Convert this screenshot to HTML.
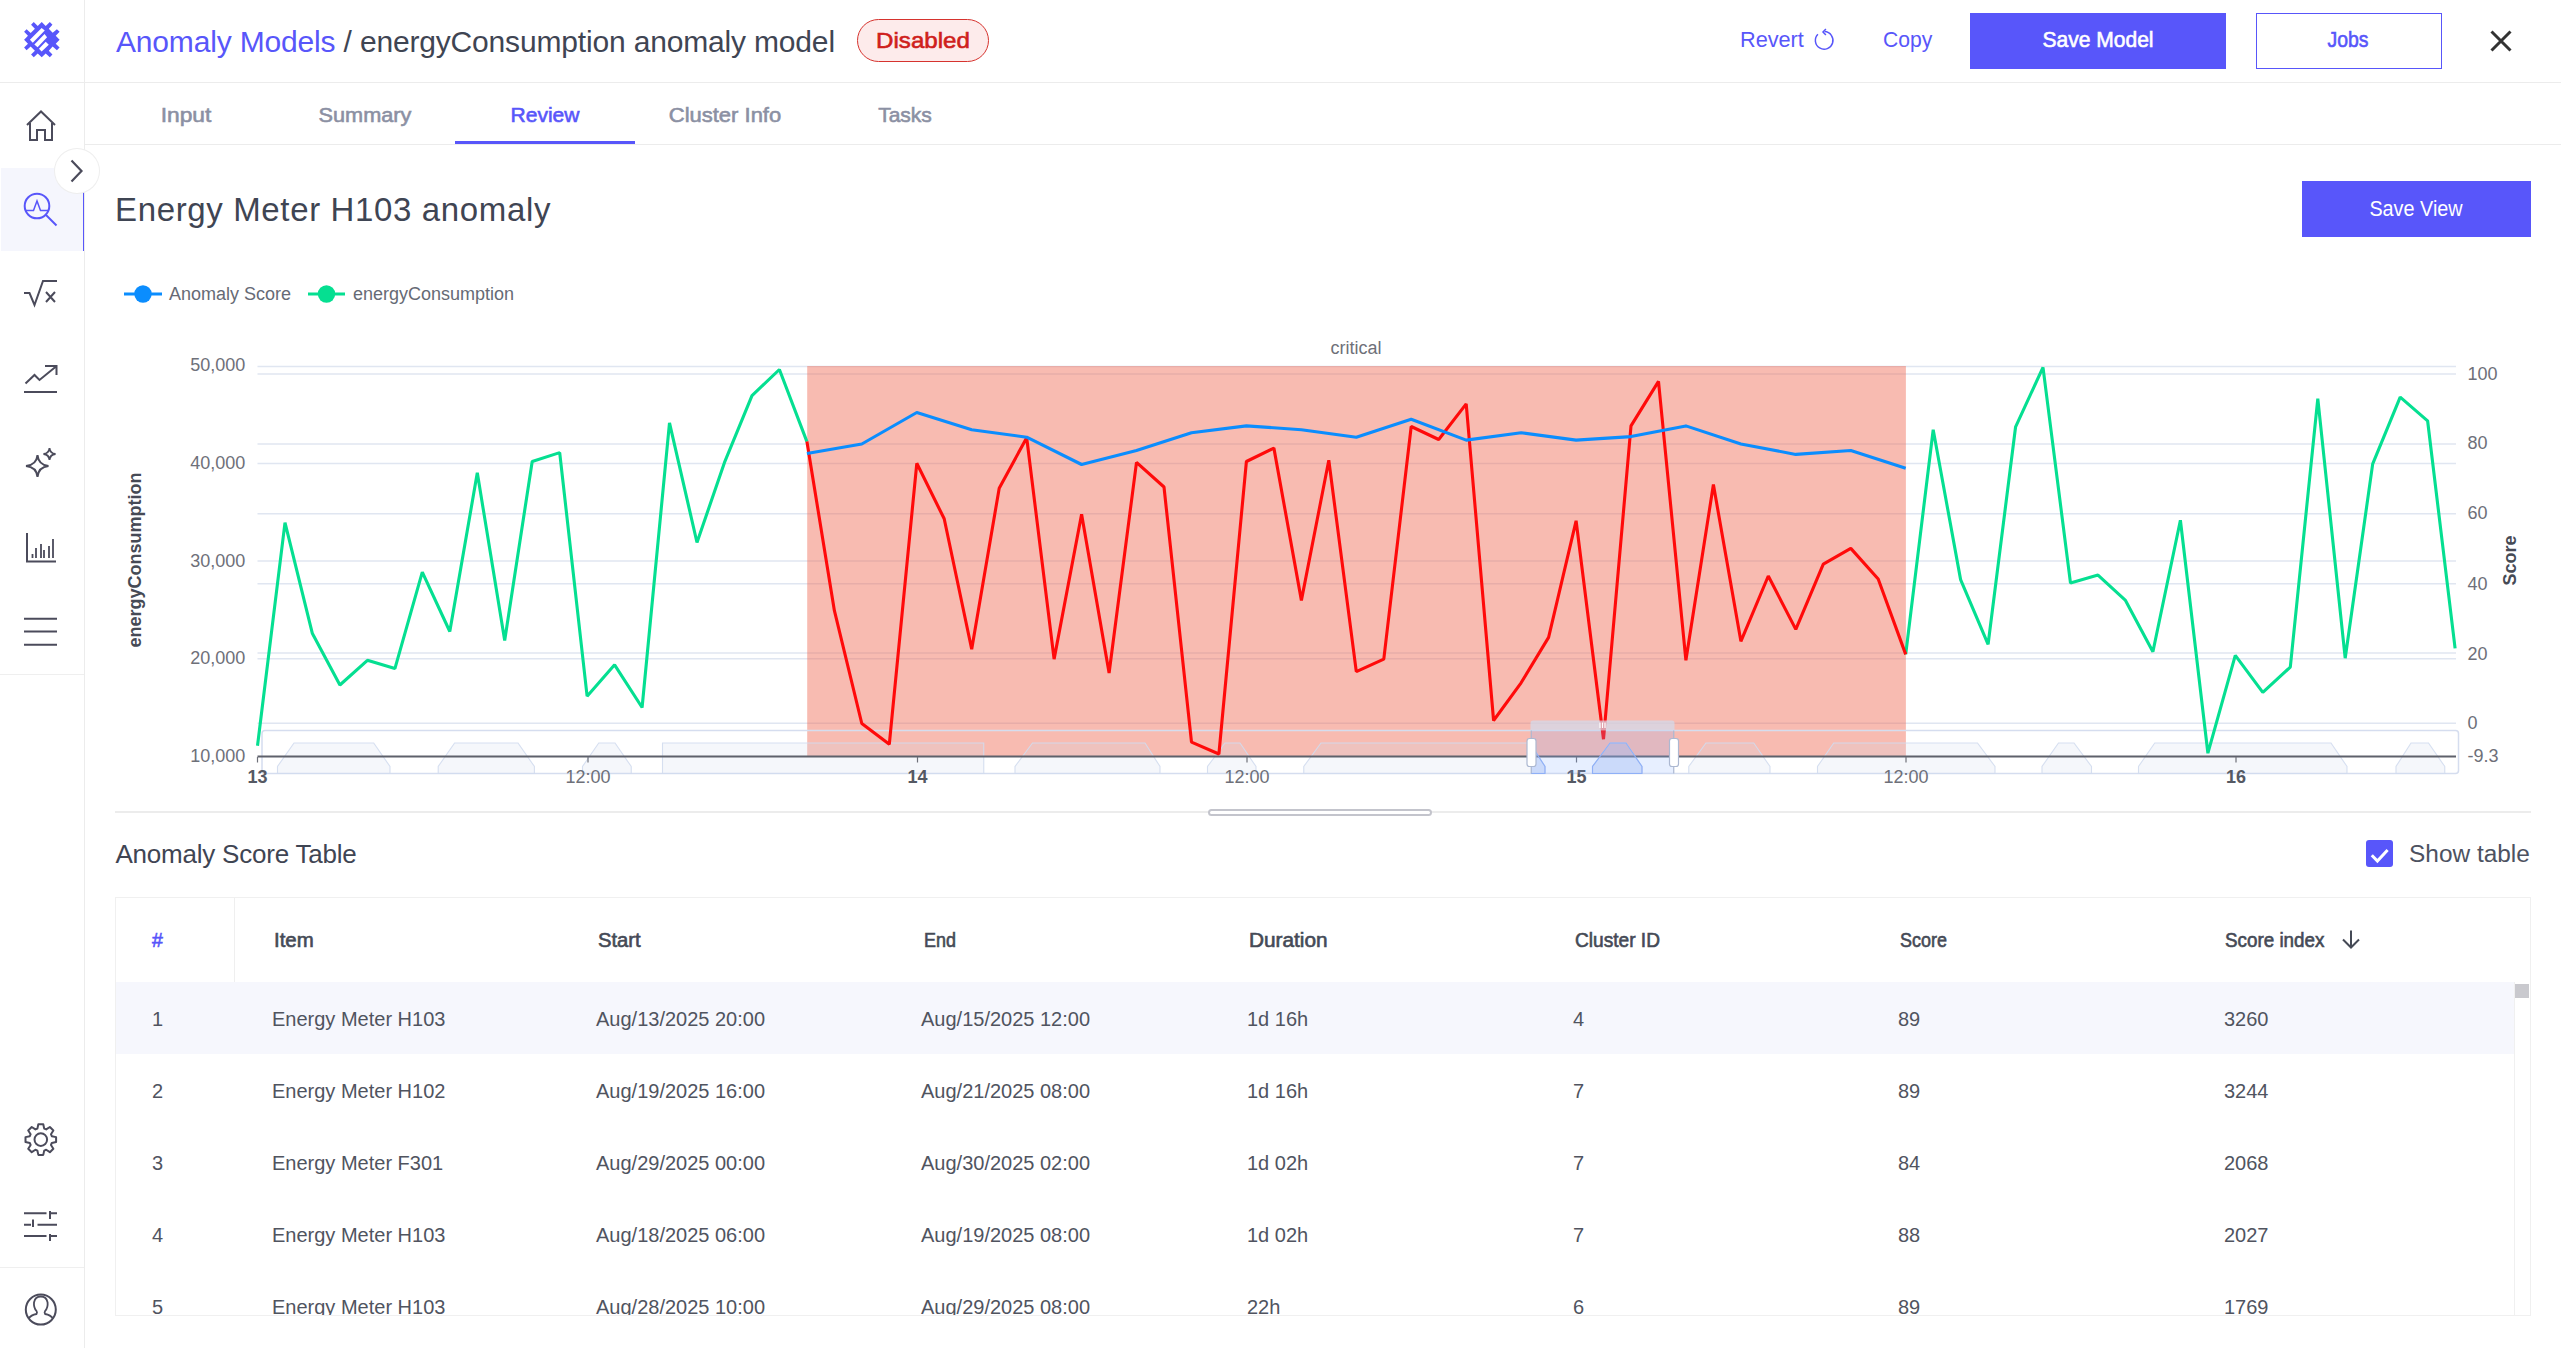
<!DOCTYPE html><html><head><meta charset="utf-8"><style>
html,body{margin:0;padding:0;width:2561px;height:1348px;overflow:hidden;background:#fff;font-family:"Liberation Sans", sans-serif;}
.t{position:absolute;white-space:nowrap;}
.a{position:absolute;}
svg{position:absolute;overflow:visible;}
</style></head><body>
<div class="a" style="left:0;top:0;width:85px;height:1348px;background:#fff;border-right:1px solid #ececec;box-sizing:border-box;"></div>
<div class="a" style="left:0;top:82px;width:2561px;height:1px;background:#ececec;"></div>
<div class="a" style="left:1px;top:168px;width:82px;height:83px;background:#f5f6fd;"></div>
<div class="a" style="left:83px;top:168px;width:1px;height:83px;background:#5856fa;"></div>
<div class="a" style="left:0;top:674px;width:84px;height:1px;background:#efefef;"></div>
<div class="a" style="left:0;top:1267px;width:84px;height:1px;background:#efefef;"></div>
<svg style="left:0;top:0" width="84" height="82" viewBox="0 0 84 82">
<path fill="#5856fa" fill-rule="evenodd" d="M33.75 22.10 L37.72 25.96 L41.73 22.10 L45.71 25.96 L49.83 22.10 L52.46 24.73 L48.79 28.66 L52.65 32.71 L56.90 29.16 L59.60 31.75 L55.74 35.80 L59.60 39.66 L55.74 43.71 L59.60 47.56 L56.90 50.27 L52.65 46.60 L48.79 50.65 L52.46 54.51 L49.83 57.21 L45.71 53.54 L41.73 57.21 L37.72 53.54 L33.75 57.21 L31.05 54.51 L34.90 50.65 L30.66 46.60 L26.61 50.27 L24.10 47.56 L27.96 43.71 L24.10 39.66 L27.96 35.80 L24.10 31.75 L26.61 29.16 L30.66 32.90 L34.90 28.66 L31.05 24.73Z M29.89 39.66 L41.66 27.89 L44.74 30.59 L32.78 42.74ZM34.33 44.48 L44.55 34.06 L47.06 37.34 L37.60 47.18ZM38.96 48.72 L45.71 41.78 L48.79 44.67 L41.66 51.62Z"/>
</svg>
<svg style="left:0px;top:84px" width="84" height="84" viewBox="0 84 84 84" fill="none" stroke="#4b4b5b" stroke-width="2" stroke-linecap="butt" stroke-linejoin="miter"><path d="M27 125 L41 111.5 L55 125 M30 123 L30 140 L37 140 L37 130 L45 130 L45 140 L52 140 L52 123"/></svg>
<svg style="left:0px;top:168px" width="84" height="84" viewBox="0 168 84 84" fill="none" stroke="#5856fa" stroke-width="2" stroke-linecap="butt" stroke-linejoin="miter"><circle cx="37" cy="206" r="12.3" stroke="#5856fa"/><path d="M46 215 L56.5 225.5" stroke="#5856fa"/><path d="M25.5 210.5 L33.5 210.5 L37 201 L40.5 210.5 L49 210.5" stroke="#5856fa" stroke-width="1.5"/></svg>
<svg style="left:0px;top:252px" width="84" height="84" viewBox="0 252 84 84" fill="none" stroke="#4b4b5b" stroke-width="2" stroke-linecap="butt" stroke-linejoin="miter"><path d="M24 293 L29.5 293 L34.5 305 L43 281 L57 281" /><path d="M46 292 L55 302 M55 292 L46 302"/></svg>
<svg style="left:0px;top:336px" width="84" height="84" viewBox="0 336 84 84" fill="none" stroke="#4b4b5b" stroke-width="2" stroke-linecap="butt" stroke-linejoin="miter"><path d="M25.5 383.5 L34.5 375 L39.5 380 L56 366.5 M45 366 L56.5 366 L56.5 375"/><path d="M24 392 L57 392"/></svg>
<svg style="left:0px;top:420px" width="84" height="84" viewBox="0 420 84 84" fill="none" stroke="#4b4b5b" stroke-width="2" stroke-linecap="butt" stroke-linejoin="miter"><path d="M37.5 455 Q38.5 465 48.5 466 Q38.5 467 37.5 477 Q36.5 467 26 466 Q36.5 465 37.5 455 Z"/><path d="M49.5 448 Q50 453.3 55.5 454 Q50 454.7 49.5 460 Q49 454.7 43.5 454 Q49 453.3 49.5 448 Z" stroke-width="1.8"/></svg>
<svg style="left:0px;top:504px" width="84" height="84" viewBox="0 504 84 84" fill="none" stroke="#4b4b5b" stroke-width="2" stroke-linecap="butt" stroke-linejoin="miter"><path d="M27 533 L27 561.5 L56 561.5"/><path d="M32.5 558 L32.5 554 M36 558 L36 548 M41 558 L41 544 M44 558 L44 550 M49 558 L49 546 M53 558 L53 539" stroke-width="1.8"/></svg>
<svg style="left:0px;top:588px" width="84" height="84" viewBox="0 588 84 84" fill="none" stroke="#4b4b5b" stroke-width="2" stroke-linecap="butt" stroke-linejoin="miter"><path d="M24 618.7 L57 618.7 M24 631.5 L57 631.5 M24 644.8 L57 644.8"/></svg>
<svg style="left:0px;top:1098px" width="84" height="84" viewBox="0 1098 84 84" fill="none" stroke="#4b4b5b" stroke-width="2" stroke-linecap="butt" stroke-linejoin="miter"><path d="M56.10 1137.13 L56.10 1142.07 L51.79 1143.00 L50.97 1144.97 L53.37 1148.67 L49.87 1152.17 L46.17 1149.77 L44.20 1150.59 L43.27 1154.90 L38.33 1154.90 L37.40 1150.59 L35.43 1149.77 L31.73 1152.17 L28.23 1148.67 L30.63 1144.97 L29.81 1143.00 L25.50 1142.07 L25.50 1137.13 L29.81 1136.20 L30.63 1134.23 L28.23 1130.53 L31.73 1127.03 L35.43 1129.43 L37.40 1128.61 L38.33 1124.30 L43.27 1124.30 L44.20 1128.61 L46.17 1129.43 L49.87 1127.03 L53.37 1130.53 L50.97 1134.23 L51.79 1136.20Z" stroke-linejoin="round"/><circle cx="40.8" cy="1139.6" r="6.3"/></svg>
<svg style="left:0px;top:1182px" width="84" height="84" viewBox="0 1182 84 84" fill="none" stroke="#4b4b5b" stroke-width="2" stroke-linecap="butt" stroke-linejoin="miter"><path d="M24 1213.2 L46.5 1213.2 M50 1213.2 L57 1213.2 M50 1211 L50 1219 M24 1224.7 L31 1224.7 M37.5 1224.7 L57 1224.7 M33 1219.5 L33 1227 M24 1236 L46.5 1236 M50 1236 L57 1236 M50 1234 L50 1241"/></svg>
<svg style="left:0px;top:1268px" width="84" height="84" viewBox="0 1268 84 84" fill="none" stroke="#4b4b5b" stroke-width="2" stroke-linecap="butt" stroke-linejoin="miter"><circle cx="40.8" cy="1309.6" r="15"/><path d="M28.5 1318.5 Q31 1315 36.5 1314 Q37.5 1312.5 36.5 1311 Q33.5 1307.5 34 1302.5 Q35 1296.5 40.8 1296.5 Q46.6 1296.5 47.6 1302.5 Q48.1 1307.5 45.1 1311 Q44.1 1312.5 45.1 1314 Q50.6 1315 53.1 1318.5" stroke-width="1.8"/></svg>
<div class="a" style="left:54.5px;top:149px;width:44px;height:44px;border-radius:50%;background:#fff;box-shadow:0 0 0 1px #eeeeee;"></div>
<svg style="left:50px;top:140px" width="60" height="60" viewBox="50 140 60 60" fill="none" stroke="#4b4b5b" stroke-width="2" stroke-linecap="butt" stroke-linejoin="miter"><path d="M71.5 160.5 L81.5 171 L71.5 181.5" stroke-width="2.2"/></svg>
<div class="t" id="crumb" style="left:116px;top:24px;font-size:30px;line-height:36px;color:#3f4553;letter-spacing:-0.17px;"><span style="color:#5856fa">Anomaly Models</span> / energyConsumption anomaly model</div>
<div class="a" style="left:857px;top:19px;width:132px;height:43px;box-sizing:border-box;border:1.5px solid #d6332e;border-radius:22px;background:#fdebeb;"></div>
<div class="t" style="left:922.5px;top:27.68px;font-size:22px;line-height:26.4px;color:#cf1f1c;font-weight:normal;letter-spacing:0px;transform-origin:center;transform:translateX(-50%) scaleX(1.096);-webkit-text-stroke:0.6px #cf1f1c;">Disabled</div>
<div class="t" style="left:1740px;top:27.18px;font-size:22px;line-height:26.4px;color:#5856fa;font-weight:normal;letter-spacing:0px;transform-origin:left;transform:scaleX(0.985);">Revert</div>
<svg style="left:1810px;top:26px" width="30" height="30" viewBox="1810 26 30 30" fill="none" stroke="#5856fa" stroke-width="1.5"><path d="M1817.9 34.2 A8.8 8.8 0 1 0 1824.6 31.6"/><path d="M1825.9 29 L1823 32 L1825.9 35"/></svg>
<div class="t" style="left:1882.5px;top:27.18px;font-size:22px;line-height:26.4px;color:#5856fa;font-weight:normal;letter-spacing:0px;transform-origin:left;transform:scaleX(0.96);">Copy</div>
<div class="a" style="left:1970px;top:13px;width:256px;height:56px;background:#5856fa;"></div>
<div class="t" style="left:2097.5px;top:27.18px;font-size:22px;line-height:26.4px;color:#fff;font-weight:normal;letter-spacing:0px;transform-origin:center;transform:translateX(-50%) scaleX(0.956);-webkit-text-stroke:0.6px #fff;">Save Model</div>
<div class="a" style="left:2256px;top:13px;width:186px;height:56px;box-sizing:border-box;border:1.5px solid #5856fa;background:#fff;"></div>
<div class="t" style="left:2347.75px;top:27.18px;font-size:22px;line-height:26.4px;color:#5856fa;font-weight:normal;letter-spacing:0px;transform-origin:center;transform:translateX(-50%) scaleX(0.883);-webkit-text-stroke:0.6px #5856fa;">Jobs</div>
<svg style="left:2485px;top:25px" width="32" height="32" viewBox="2485 25 32 32" fill="none" stroke="#333" stroke-width="3"><path d="M2491.5 31.5 L2510.5 50.5 M2510.5 31.5 L2491.5 50.5"/></svg>
<div class="t" style="left:185.5px;top:101.92px;font-size:21px;line-height:25.2px;color:#8b90a3;font-weight:normal;letter-spacing:0px;transform-origin:center;transform:translateX(-50%) scaleX(1.085);-webkit-text-stroke:0.6px #8b90a3;">Input</div>
<div class="t" style="left:365.0px;top:101.92px;font-size:21px;line-height:25.2px;color:#8b90a3;font-weight:normal;letter-spacing:0px;transform-origin:center;transform:translateX(-50%) scaleX(1.033);-webkit-text-stroke:0.6px #8b90a3;">Summary</div>
<div class="t" style="left:545.0px;top:101.92px;font-size:21px;line-height:25.2px;color:#5856fa;font-weight:normal;letter-spacing:0px;transform-origin:center;transform:translateX(-50%) scaleX(1.0);-webkit-text-stroke:0.6px #5856fa;">Review</div>
<div class="t" style="left:725.0px;top:101.92px;font-size:21px;line-height:25.2px;color:#8b90a3;font-weight:normal;letter-spacing:0px;transform-origin:center;transform:translateX(-50%) scaleX(1.047);-webkit-text-stroke:0.6px #8b90a3;">Cluster Info</div>
<div class="t" style="left:905.0px;top:101.92px;font-size:21px;line-height:25.2px;color:#8b90a3;font-weight:normal;letter-spacing:0px;transform-origin:center;transform:translateX(-50%) scaleX(1.0);-webkit-text-stroke:0.6px #8b90a3;">Tasks</div>
<div class="a" style="left:84px;top:144px;width:2477px;height:1px;background:#ececec;"></div>
<div class="a" style="left:455px;top:141px;width:180px;height:3px;background:#5856fa;"></div>
<div class="t" style="left:115px;top:189.77px;font-size:33px;line-height:39.6px;color:#3f4553;font-weight:normal;letter-spacing:0.64px;transform-origin:left;">Energy Meter H103 anomaly</div>
<div class="a" style="left:2302px;top:181px;width:229px;height:56px;background:#5856fa;"></div>
<div class="t" style="left:2416px;top:195.68px;font-size:22px;line-height:26.4px;color:#fff;font-weight:normal;letter-spacing:0px;transform-origin:center;transform:translateX(-50%) scaleX(0.9);">Save View</div>
<svg style="left:0;top:0" width="2561" height="1348" viewBox="0 0 2561 1348" font-family='"Liberation Sans", sans-serif'>
<g>
<line x1="124" y1="294" x2="162" y2="294" stroke="#0b8dfe" stroke-width="3"/><circle cx="143" cy="294" r="8.7" fill="#0b8dfe"/>
<line x1="308" y1="294" x2="345" y2="294" stroke="#05df91" stroke-width="3"/><circle cx="326.5" cy="294" r="8.7" fill="#05df91"/>
<text id="lg1" x="169" y="299.5" font-size="18" fill="#666a75">Anomaly Score</text>
<text id="lg2" x="353" y="299.5" font-size="18" fill="#666a75">energyConsumption</text>
</g>
<text x="1356" y="353.5" font-size="18" fill="#6e7079" text-anchor="middle">critical</text>
<line x1="257.5" y1="366.5" x2="2456" y2="366.5" stroke="#e0e6f1" stroke-width="1.5"/>
<line x1="257.5" y1="463.5" x2="2456" y2="463.5" stroke="#e0e6f1" stroke-width="1.5"/>
<line x1="257.5" y1="561" x2="2456" y2="561" stroke="#e0e6f1" stroke-width="1.5"/>
<line x1="257.5" y1="658.8" x2="2456" y2="658.8" stroke="#e0e6f1" stroke-width="1.5"/>
<line x1="257.5" y1="374" x2="2456" y2="374" stroke="#e0e6f1" stroke-width="1.5"/>
<line x1="257.5" y1="444" x2="2456" y2="444" stroke="#e0e6f1" stroke-width="1.5"/>
<line x1="257.5" y1="513.7" x2="2456" y2="513.7" stroke="#e0e6f1" stroke-width="1.5"/>
<line x1="257.5" y1="583.8" x2="2456" y2="583.8" stroke="#e0e6f1" stroke-width="1.5"/>
<line x1="257.5" y1="653" x2="2456" y2="653" stroke="#e0e6f1" stroke-width="1.5"/>
<line x1="257.5" y1="723.3" x2="2456" y2="723.3" stroke="#e0e6f1" stroke-width="1.5"/>
<rect x="807.2" y="366" width="1098.7" height="391" fill="#ef6a55" fill-opacity="0.46"/>
<rect x="262" y="730.5" width="2196.5" height="43" rx="3" fill="none" stroke="#d5ddef" stroke-width="1.5"/>
<path d="M277.5 773.5 L277.5 766.5 L294 743 L373.7 743 L390 766.5 L390 773.5 Z M438.2 773.5 L438.2 766.5 L454.6 743 L518 743 L534.4 766.5 L534.4 773.5 Z M582.5 773.5 L582.5 766.5 L598.75 743 L615 743 L631.25 766.5 L631.25 773.5 Z M662.5 773.5 L662.5 743 L983.75 743 L983.75 773.5 Z M1015 773.5 L1015 766.5 L1032.5 743 L1145 743 L1160 766.5 L1160 773.5 Z M1207.5 773.5 L1207.5 766.5 L1225 743 L1240 743 L1256 766.5 L1256 773.5 Z M1303.75 773.5 L1303.75 766.5 L1321 743 L1530 743 L1545 766.5 L1545 773.5 Z M1592.5 773.5 L1592.5 766.5 L1610 743 L1626 743 L1642 766.5 L1642 773.5 Z M1688.75 773.5 L1688.75 766.5 L1706 743 L1753.75 743 L1770 766.5 L1770 773.5 Z M1817.5 773.5 L1817.5 766.5 L1833.75 743 L1977.5 743 L1995 766.5 L1995 773.5 Z M2042 773.5 L2042 766.5 L2058.5 743 L2074 743 L2091.5 766.5 L2091.5 773.5 Z M2138.5 773.5 L2138.5 766.5 L2154.75 743 L2331 743 L2347 766.5 L2347 773.5 Z M2396 773.5 L2396 766.5 L2411 743 L2428.5 743 L2444.75 766.5 L2444.75 773.5 Z" fill="#d2dbee" fill-opacity="0.22" stroke="#d2dbee" stroke-opacity="0.9" stroke-width="1.1"/>
<clipPath id="selclip"><rect x="1531" y="720" width="143" height="54"/></clipPath>
<line x1="257.5" y1="756.5" x2="2456" y2="756.5" stroke="#5e616b" stroke-width="2"/>
<line x1="257.5" y1="757" x2="257.5" y2="762.5" stroke="#6e7079" stroke-width="1.2"/>
<text x="257.5" y="782.5" font-size="18" fill="#555963" font-weight="bold" text-anchor="middle">13</text>
<line x1="588" y1="757" x2="588" y2="762.5" stroke="#6e7079" stroke-width="1.2"/>
<text x="588" y="782.5" font-size="18" fill="#6e7079" font-weight="normal" text-anchor="middle">12:00</text>
<line x1="917.5" y1="757" x2="917.5" y2="762.5" stroke="#6e7079" stroke-width="1.2"/>
<text x="917.5" y="782.5" font-size="18" fill="#555963" font-weight="bold" text-anchor="middle">14</text>
<line x1="1247" y1="757" x2="1247" y2="762.5" stroke="#6e7079" stroke-width="1.2"/>
<text x="1247" y="782.5" font-size="18" fill="#6e7079" font-weight="normal" text-anchor="middle">12:00</text>
<line x1="1576.5" y1="757" x2="1576.5" y2="762.5" stroke="#6e7079" stroke-width="1.2"/>
<text x="1576.5" y="782.5" font-size="18" fill="#555963" font-weight="bold" text-anchor="middle">15</text>
<line x1="1906" y1="757" x2="1906" y2="762.5" stroke="#6e7079" stroke-width="1.2"/>
<text x="1906" y="782.5" font-size="18" fill="#6e7079" font-weight="normal" text-anchor="middle">12:00</text>
<line x1="2236" y1="757" x2="2236" y2="762.5" stroke="#6e7079" stroke-width="1.2"/>
<text x="2236" y="782.5" font-size="18" fill="#555963" font-weight="bold" text-anchor="middle">16</text>
<text x="245.3" y="371.3" font-size="18" fill="#6e7079" text-anchor="end">50,000</text>
<text x="245.3" y="468.9" font-size="18" fill="#6e7079" text-anchor="end">40,000</text>
<text x="245.3" y="566.6" font-size="18" fill="#6e7079" text-anchor="end">30,000</text>
<text x="245.3" y="664.2" font-size="18" fill="#6e7079" text-anchor="end">20,000</text>
<text x="245.3" y="761.9" font-size="18" fill="#6e7079" text-anchor="end">10,000</text>
<text x="2467.5" y="379.8" font-size="18" fill="#6e7079">100</text>
<text x="2467.5" y="449.4" font-size="18" fill="#6e7079">80</text>
<text x="2467.5" y="519.0" font-size="18" fill="#6e7079">60</text>
<text x="2467.5" y="590.0" font-size="18" fill="#6e7079">40</text>
<text x="2467.5" y="659.5" font-size="18" fill="#6e7079">20</text>
<text x="2467.5" y="729.1" font-size="18" fill="#6e7079">0</text>
<text x="2467.5" y="761.5" font-size="18" fill="#6e7079">-9.3</text>
<text transform="translate(140.5 560) rotate(-90)" font-size="18" font-weight="bold" fill="#464a55" text-anchor="middle">energyConsumption</text>
<text transform="translate(2515.5 560.5) rotate(-90)" font-size="18" font-weight="bold" fill="#464a55" text-anchor="middle">Score</text>
<clipPath id="gridclip"><rect x="255" y="366" width="2204" height="392"/></clipPath><g clip-path="url(#gridclip)">
<polyline points="257.5,745.8 285.0,522.6 312.4,633.6 339.9,685.0 367.4,660.3 394.9,668.6 422.3,572.2 449.8,631.5 477.3,472.8 504.7,640.4 532.2,461.5 559.7,452.6 587.1,696.2 614.6,664.8 642.1,707.5 669.5,422.9 697.0,542.5 724.5,462.4 752.0,395.6 779.4,369.5 806.9,441.6" fill="none" stroke="#05df91" stroke-width="3.1" stroke-linejoin="bevel"/>
<polyline points="1905.7,654.4 1933.2,429.7 1960.6,579.6 1988.1,644.3 2015.6,426.8 2043.0,367.4 2070.5,583.1 2098.0,575.1 2125.5,600.4 2152.9,651.7 2180.4,520.2 2207.9,753.2 2235.3,655.3 2262.8,692.3 2290.3,667.1 2317.8,398.6 2345.2,658.2 2372.7,463.9 2400.2,397.1 2427.6,420.8 2455.1,648.4" fill="none" stroke="#05df91" stroke-width="3.1" stroke-linejoin="bevel"/>
<polyline points="806.9,441.6 834.4,610.7 861.8,723.5 889.3,744.3 916.8,463.3 944.2,518.8 971.7,649.3 999.2,488.2 1026.7,437.7 1054.1,659.1 1081.6,514.3 1109.1,673.0 1136.5,462.4 1164.0,487.0 1191.5,742.2 1218.9,754.0 1246.4,461.5 1273.9,448.1 1301.4,600.4 1328.8,460.3 1356.3,671.6 1383.8,659.1 1411.2,426.5 1438.7,439.5 1466.2,403.9 1493.6,720.5 1521.1,682.8 1548.6,637.4 1576.1,520.8 1603.5,739.2 1631.0,425.9 1658.5,381.4 1685.9,660.3 1713.4,484.6 1740.9,641.3 1768.3,576.0 1795.8,629.4 1823.3,564.2 1850.8,548.4 1878.2,579.0 1905.7,654.4" fill="none" stroke="#ff0a0a" stroke-width="3.1" stroke-linejoin="bevel"/>
<polyline points="806.9,453.5 861.8,444.0 916.8,412.5 971.7,429.7 1026.7,437.2 1081.6,464.5 1136.5,450.5 1191.5,432.7 1246.4,425.9 1301.4,429.7 1356.3,437.2 1411.2,419.3 1466.2,440.1 1521.1,432.7 1576.1,440.1 1631.0,436.6 1685.9,425.9 1740.9,444.0 1795.8,454.4 1850.8,450.5 1905.7,468.3" fill="none" stroke="#0b8dfe" stroke-width="3.1" stroke-linejoin="round"/>
</g>
<rect x="1531" y="730.5" width="143" height="43" fill="#87afff" fill-opacity="0.2"/>
<path d="M277.5 773.5 L277.5 766.5 L294 743 L373.7 743 L390 766.5 L390 773.5 Z M438.2 773.5 L438.2 766.5 L454.6 743 L518 743 L534.4 766.5 L534.4 773.5 Z M582.5 773.5 L582.5 766.5 L598.75 743 L615 743 L631.25 766.5 L631.25 773.5 Z M662.5 773.5 L662.5 743 L983.75 743 L983.75 773.5 Z M1015 773.5 L1015 766.5 L1032.5 743 L1145 743 L1160 766.5 L1160 773.5 Z M1207.5 773.5 L1207.5 766.5 L1225 743 L1240 743 L1256 766.5 L1256 773.5 Z M1303.75 773.5 L1303.75 766.5 L1321 743 L1530 743 L1545 766.5 L1545 773.5 Z M1592.5 773.5 L1592.5 766.5 L1610 743 L1626 743 L1642 766.5 L1642 773.5 Z M1688.75 773.5 L1688.75 766.5 L1706 743 L1753.75 743 L1770 766.5 L1770 773.5 Z M1817.5 773.5 L1817.5 766.5 L1833.75 743 L1977.5 743 L1995 766.5 L1995 773.5 Z M2042 773.5 L2042 766.5 L2058.5 743 L2074 743 L2091.5 766.5 L2091.5 773.5 Z M2138.5 773.5 L2138.5 766.5 L2154.75 743 L2331 743 L2347 766.5 L2347 773.5 Z M2396 773.5 L2396 766.5 L2411 743 L2428.5 743 L2444.75 766.5 L2444.75 773.5 Z" fill="#8fb0f7" fill-opacity="0.25" stroke="#8fb0f7" stroke-width="1.1" clip-path="url(#selclip)"/>
<path d="M1530.5 730.5 L1530.5 723 Q1530.5 720.5 1533 720.5 L1672 720.5 Q1674.5 720.5 1674.5 723 L1674.5 730.5 Z" fill="#d2dbee" fill-opacity="0.7"/>
<line x1="1531.25" y1="730.5" x2="1531.25" y2="773.5" stroke="#acb8d1" stroke-width="1.2"/>
<line x1="1673.75" y1="730.5" x2="1673.75" y2="773.5" stroke="#acb8d1" stroke-width="1.2"/>
<rect x="1527" y="738.5" width="9" height="28" rx="2.5" fill="#fff" stroke="#acb8d1" stroke-width="1.2"/>
<rect x="1669.5" y="738.5" width="9" height="28" rx="2.5" fill="#fff" stroke="#acb8d1" stroke-width="1.2"/>
<path d="M1600 722.5 L1600 728 M1602.5 722.5 L1602.5 728 M1605 722.5 L1605 728" stroke="#fff" stroke-width="1.2"/>
</svg>
<div class="a" style="left:115px;top:811px;width:2416px;height:1.5px;background:#ececec;"></div>
<div class="a" style="left:1207.5px;top:809px;width:224px;height:7px;box-sizing:border-box;border-radius:3.5px;background:#fff;border:2px solid #c3c4cc;"></div>
<div class="t" style="left:115.5px;top:839.14px;font-size:26px;line-height:31.2px;color:#3f4553;font-weight:normal;letter-spacing:-0.22px;transform-origin:left;">Anomaly Score Table</div>
<div class="a" style="left:2366px;top:840px;width:27px;height:27px;border-radius:3px;background:#5856fa;"></div>
<svg style="left:2366px;top:840px" width="27" height="27" viewBox="0 0 27 27" fill="none" stroke="#fff" stroke-width="3"><path d="M5.8 15.2 L11.4 21 L21.6 9.9"/></svg>
<div class="t" style="left:2409px;top:840.73px;font-size:23px;line-height:27.6px;color:#4d5261;font-weight:normal;letter-spacing:0px;transform-origin:left;transform:scaleX(1.062);">Show table</div>
<div class="a" style="left:115px;top:897px;width:2416px;height:419px;box-sizing:border-box;border:1px solid #f0f0f0;"></div>
<div class="a" style="left:234px;top:898px;width:1px;height:84px;background:#efefef;"></div>
<div class="a" style="left:116px;top:981.5px;width:2414px;height:1px;background:#efefef;"></div>
<div class="a" style="left:116px;top:982px;width:2398px;height:72px;background:#f6f7fd;"></div>
<div class="a" style="left:2514px;top:982px;width:16px;height:333px;background:#fff;border-left:1px solid #f0f0f0;box-sizing:border-box;"></div>
<div class="a" style="left:2515px;top:983.5px;width:14px;height:14px;background:#c9c9ce;"></div>
<div class="t" style="left:152px;top:928.74px;font-size:19.5px;line-height:23.4px;color:#5856fa;font-weight:normal;letter-spacing:0px;transform-origin:left;-webkit-text-stroke:0.6px #5856fa;">#</div>
<div class="t" style="left:274px;top:928.74px;font-size:19.5px;line-height:23.4px;color:#454a56;font-weight:normal;letter-spacing:0px;transform-origin:left;transform:scaleX(1.047);-webkit-text-stroke:0.6px #454a56;">Item</div>
<div class="t" style="left:597.5px;top:928.74px;font-size:19.5px;line-height:23.4px;color:#454a56;font-weight:normal;letter-spacing:0px;transform-origin:left;transform:scaleX(1.037);-webkit-text-stroke:0.6px #454a56;">Start</div>
<div class="t" style="left:923.75px;top:928.74px;font-size:19.5px;line-height:23.4px;color:#454a56;font-weight:normal;letter-spacing:0px;transform-origin:left;transform:scaleX(0.92);-webkit-text-stroke:0.6px #454a56;">End</div>
<div class="t" style="left:1249px;top:928.74px;font-size:19.5px;line-height:23.4px;color:#454a56;font-weight:normal;letter-spacing:0px;transform-origin:left;transform:scaleX(1.066);-webkit-text-stroke:0.6px #454a56;">Duration</div>
<div class="t" style="left:1574.5px;top:928.74px;font-size:19.5px;line-height:23.4px;color:#454a56;font-weight:normal;letter-spacing:0px;transform-origin:left;transform:scaleX(0.98);-webkit-text-stroke:0.6px #454a56;">Cluster ID</div>
<div class="t" style="left:1900px;top:928.74px;font-size:19.5px;line-height:23.4px;color:#454a56;font-weight:normal;letter-spacing:0px;transform-origin:left;transform:scaleX(0.92);-webkit-text-stroke:0.6px #454a56;">Score</div>
<div class="t" style="left:2225px;top:928.74px;font-size:19.5px;line-height:23.4px;color:#454a56;font-weight:normal;letter-spacing:0px;transform-origin:left;transform:scaleX(0.965);-webkit-text-stroke:0.6px #454a56;">Score index</div>
<svg style="left:2336px;top:926px" width="30" height="26" viewBox="2336 926 30 26" fill="none" stroke="#454a56" stroke-width="2"><path d="M2351 930.5 L2351 947 M2343 939.5 L2351 947.5 L2359 939.5"/></svg>
<div class="a" style="left:116px;top:982px;width:2398px;height:333px;overflow:hidden;">
<div class="t" style="left:36px;top:25.32px;font-size:20px;line-height:24.0px;color:#50545f;font-weight:normal;letter-spacing:0px;transform-origin:left;">1</div>
<div class="t" style="left:156px;top:25.32px;font-size:20px;line-height:24.0px;color:#50545f;font-weight:normal;letter-spacing:0px;transform-origin:left;">Energy Meter H103</div>
<div class="t" style="left:480px;top:25.32px;font-size:20px;line-height:24.0px;color:#50545f;font-weight:normal;letter-spacing:0px;transform-origin:left;">Aug/13/2025 20:00</div>
<div class="t" style="left:805px;top:25.32px;font-size:20px;line-height:24.0px;color:#50545f;font-weight:normal;letter-spacing:0px;transform-origin:left;">Aug/15/2025 12:00</div>
<div class="t" style="left:1131px;top:25.32px;font-size:20px;line-height:24.0px;color:#50545f;font-weight:normal;letter-spacing:0px;transform-origin:left;">1d 16h</div>
<div class="t" style="left:1457px;top:25.32px;font-size:20px;line-height:24.0px;color:#50545f;font-weight:normal;letter-spacing:0px;transform-origin:left;">4</div>
<div class="t" style="left:1782px;top:25.32px;font-size:20px;line-height:24.0px;color:#50545f;font-weight:normal;letter-spacing:0px;transform-origin:left;">89</div>
<div class="t" style="left:2108px;top:25.32px;font-size:20px;line-height:24.0px;color:#50545f;font-weight:normal;letter-spacing:0px;transform-origin:left;">3260</div>
<div class="t" style="left:36px;top:97.32px;font-size:20px;line-height:24.0px;color:#50545f;font-weight:normal;letter-spacing:0px;transform-origin:left;">2</div>
<div class="t" style="left:156px;top:97.32px;font-size:20px;line-height:24.0px;color:#50545f;font-weight:normal;letter-spacing:0px;transform-origin:left;">Energy Meter H102</div>
<div class="t" style="left:480px;top:97.32px;font-size:20px;line-height:24.0px;color:#50545f;font-weight:normal;letter-spacing:0px;transform-origin:left;">Aug/19/2025 16:00</div>
<div class="t" style="left:805px;top:97.32px;font-size:20px;line-height:24.0px;color:#50545f;font-weight:normal;letter-spacing:0px;transform-origin:left;">Aug/21/2025 08:00</div>
<div class="t" style="left:1131px;top:97.32px;font-size:20px;line-height:24.0px;color:#50545f;font-weight:normal;letter-spacing:0px;transform-origin:left;">1d 16h</div>
<div class="t" style="left:1457px;top:97.32px;font-size:20px;line-height:24.0px;color:#50545f;font-weight:normal;letter-spacing:0px;transform-origin:left;">7</div>
<div class="t" style="left:1782px;top:97.32px;font-size:20px;line-height:24.0px;color:#50545f;font-weight:normal;letter-spacing:0px;transform-origin:left;">89</div>
<div class="t" style="left:2108px;top:97.32px;font-size:20px;line-height:24.0px;color:#50545f;font-weight:normal;letter-spacing:0px;transform-origin:left;">3244</div>
<div class="t" style="left:36px;top:169.32px;font-size:20px;line-height:24.0px;color:#50545f;font-weight:normal;letter-spacing:0px;transform-origin:left;">3</div>
<div class="t" style="left:156px;top:169.32px;font-size:20px;line-height:24.0px;color:#50545f;font-weight:normal;letter-spacing:0px;transform-origin:left;">Energy Meter F301</div>
<div class="t" style="left:480px;top:169.32px;font-size:20px;line-height:24.0px;color:#50545f;font-weight:normal;letter-spacing:0px;transform-origin:left;">Aug/29/2025 00:00</div>
<div class="t" style="left:805px;top:169.32px;font-size:20px;line-height:24.0px;color:#50545f;font-weight:normal;letter-spacing:0px;transform-origin:left;">Aug/30/2025 02:00</div>
<div class="t" style="left:1131px;top:169.32px;font-size:20px;line-height:24.0px;color:#50545f;font-weight:normal;letter-spacing:0px;transform-origin:left;">1d 02h</div>
<div class="t" style="left:1457px;top:169.32px;font-size:20px;line-height:24.0px;color:#50545f;font-weight:normal;letter-spacing:0px;transform-origin:left;">7</div>
<div class="t" style="left:1782px;top:169.32px;font-size:20px;line-height:24.0px;color:#50545f;font-weight:normal;letter-spacing:0px;transform-origin:left;">84</div>
<div class="t" style="left:2108px;top:169.32px;font-size:20px;line-height:24.0px;color:#50545f;font-weight:normal;letter-spacing:0px;transform-origin:left;">2068</div>
<div class="t" style="left:36px;top:241.32px;font-size:20px;line-height:24.0px;color:#50545f;font-weight:normal;letter-spacing:0px;transform-origin:left;">4</div>
<div class="t" style="left:156px;top:241.32px;font-size:20px;line-height:24.0px;color:#50545f;font-weight:normal;letter-spacing:0px;transform-origin:left;">Energy Meter H103</div>
<div class="t" style="left:480px;top:241.32px;font-size:20px;line-height:24.0px;color:#50545f;font-weight:normal;letter-spacing:0px;transform-origin:left;">Aug/18/2025 06:00</div>
<div class="t" style="left:805px;top:241.32px;font-size:20px;line-height:24.0px;color:#50545f;font-weight:normal;letter-spacing:0px;transform-origin:left;">Aug/19/2025 08:00</div>
<div class="t" style="left:1131px;top:241.32px;font-size:20px;line-height:24.0px;color:#50545f;font-weight:normal;letter-spacing:0px;transform-origin:left;">1d 02h</div>
<div class="t" style="left:1457px;top:241.32px;font-size:20px;line-height:24.0px;color:#50545f;font-weight:normal;letter-spacing:0px;transform-origin:left;">7</div>
<div class="t" style="left:1782px;top:241.32px;font-size:20px;line-height:24.0px;color:#50545f;font-weight:normal;letter-spacing:0px;transform-origin:left;">88</div>
<div class="t" style="left:2108px;top:241.32px;font-size:20px;line-height:24.0px;color:#50545f;font-weight:normal;letter-spacing:0px;transform-origin:left;">2027</div>
<div class="t" style="left:36px;top:313.32px;font-size:20px;line-height:24.0px;color:#50545f;font-weight:normal;letter-spacing:0px;transform-origin:left;">5</div>
<div class="t" style="left:156px;top:313.32px;font-size:20px;line-height:24.0px;color:#50545f;font-weight:normal;letter-spacing:0px;transform-origin:left;">Energy Meter H103</div>
<div class="t" style="left:480px;top:313.32px;font-size:20px;line-height:24.0px;color:#50545f;font-weight:normal;letter-spacing:0px;transform-origin:left;">Aug/28/2025 10:00</div>
<div class="t" style="left:805px;top:313.32px;font-size:20px;line-height:24.0px;color:#50545f;font-weight:normal;letter-spacing:0px;transform-origin:left;">Aug/29/2025 08:00</div>
<div class="t" style="left:1131px;top:313.32px;font-size:20px;line-height:24.0px;color:#50545f;font-weight:normal;letter-spacing:0px;transform-origin:left;">22h</div>
<div class="t" style="left:1457px;top:313.32px;font-size:20px;line-height:24.0px;color:#50545f;font-weight:normal;letter-spacing:0px;transform-origin:left;">6</div>
<div class="t" style="left:1782px;top:313.32px;font-size:20px;line-height:24.0px;color:#50545f;font-weight:normal;letter-spacing:0px;transform-origin:left;">89</div>
<div class="t" style="left:2108px;top:313.32px;font-size:20px;line-height:24.0px;color:#50545f;font-weight:normal;letter-spacing:0px;transform-origin:left;">1769</div>
</div>
</body></html>
